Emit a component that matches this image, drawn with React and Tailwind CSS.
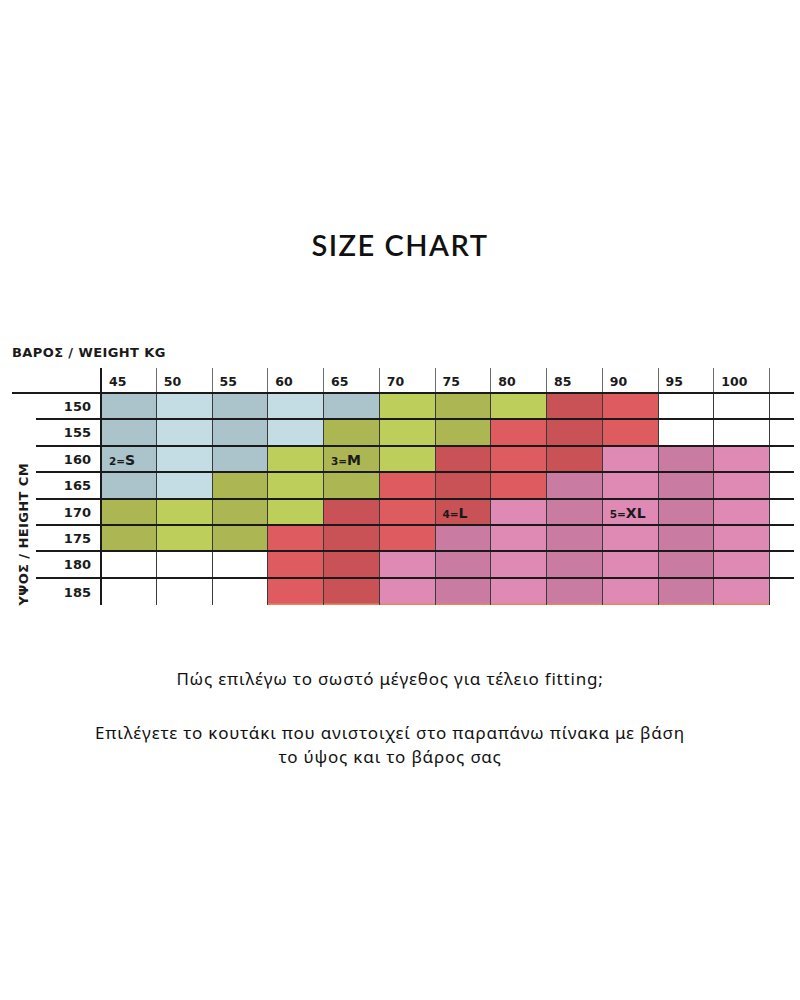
import React from 'react'

const COLORS = {
  B1: 'bg-[#abc4cc]',
  B2: 'bg-[#c4dce3]',
  G1: 'bg-[#bdcf5a]',
  G2: 'bg-[#acb653]',
  R1: 'bg-[#c95257]',
  R2: 'bg-[#de5b5f]',
  P1: 'bg-[#c97ba2]',
  P2: 'bg-[#df8ab4]',
  W: 'bg-white',
}

const weights = [45, 50, 55, 60, 65, 70, 75, 80, 85, 90, 95, 100]

// height rows: colour per weight column, plus optional size labels
const rows = [
  { h: 150, c: ['B1', 'B2', 'B1', 'B2', 'B1', 'G1', 'G2', 'G1', 'R1', 'R2', 'W', 'W'] },
  { h: 155, c: ['B1', 'B2', 'B1', 'B2', 'G2', 'G1', 'G2', 'R2', 'R1', 'R2', 'W', 'W'] },
  { h: 160, c: ['B1', 'B2', 'B1', 'G1', 'G2', 'G1', 'R1', 'R2', 'R1', 'P2', 'P1', 'P2'], labels: { 0: ['2=', 'S'], 4: ['3=', 'M'] } },
  { h: 165, c: ['B1', 'B2', 'G2', 'G1', 'G2', 'R2', 'R1', 'R2', 'P1', 'P2', 'P1', 'P2'] },
  { h: 170, c: ['G2', 'G1', 'G2', 'G1', 'R1', 'R2', 'R1', 'P2', 'P1', 'P2', 'P1', 'P2'], labels: { 6: ['4=', 'L'], 9: ['5=', 'XL'] } },
  { h: 175, c: ['G2', 'G1', 'G2', 'R2', 'R1', 'R2', 'P1', 'P2', 'P1', 'P2', 'P1', 'P2'] },
  { h: 180, c: ['W', 'W', 'W', 'R2', 'R1', 'P2', 'P1', 'P2', 'P1', 'P2', 'P1', 'P2'] },
  { h: 185, c: ['W', 'W', 'W', 'R2', 'R1', 'P2', 'P1', 'P2', 'P1', 'P2', 'P1', 'P2'] },
]

const chartFont = { fontFamily: '"DejaVu Sans", "Noto Sans", sans-serif' }

const SizeChart = () => {
  return (
    <div className="ml-[12px] w-[782px]" style={chartFont}>
      {/* Weight axis title */}
      <div className="text-[13px] font-bold leading-[16px] tracking-[0.4px] text-[#1a1a1a]">
        ΒΑΡΟΣ / WEIGHT KG
      </div>

      {/* Header row */}
      <div className="mt-[7px] flex h-[26px] border-b-2 border-[#1a1a1a]">
        <div className="w-[88px]" />
        {weights.map((w, i) => (
          <div
            key={w}
            className={`w-[55.75px] pl-[7px] pt-[6px] text-[12.5px] font-bold leading-[16px] text-[#1a1a1a] ${
              i === 0 ? 'border-l-2 border-[#1a1a1a]' : 'border-l-[1.5px] border-[#6b6b6b]'
            }`}
          >
            {w}
          </div>
        ))}
        <div className="w-[25px] border-l-[1.5px] border-[#6b6b6b]" />
      </div>

      {/* Body */}
      <div className="flex">
        {/* Height axis title */}
        <div className="flex w-[24px] items-end justify-center">
          <div className="rotate-180 whitespace-nowrap text-[13px] font-bold leading-[16px] tracking-[0.4px] text-[#1a1a1a] [writing-mode:vertical-rl]">
            ΥΨΟΣ / HEIGHT CM
          </div>
        </div>

        <div className="flex flex-1 flex-col">
          {rows.map((row, ri) => {
            const last = ri === rows.length - 1
            return (
              <div key={row.h} className={`flex h-[26.4px] ${!last ? 'border-b-2 border-[#1a1a1a]' : ''}`}>
                <div className="flex w-[64px] items-center justify-end pr-[9px] pt-[1px] text-[13px] font-bold text-[#1a1a1a]">
                  {row.h}
                </div>
                {row.c.map((c, ci) => {
                  const label = row.labels && row.labels[ci]
                  return (
                    <div
                      key={ci}
                      className={`flex w-[55.75px] items-center pl-[7px] ${COLORS[c]} ${
                        ci === 0 ? 'border-l-2 border-[#1a1a1a]' : 'border-l-[1.5px] border-[#3a3a3a]'
                      } ${last && c !== 'W' ? 'shadow-[inset_0_-1.5px_0_#e6855f]' : ''}`}
                    >
                      {label && (
                        <span className="pt-[3px] font-bold leading-none text-[#1a1a1a]">
                          <span className="text-[10.5px]">{label[0]}</span>
                          <span className="text-[14px]">{label[1]}</span>
                        </span>
                      )}
                    </div>
                  )
                })}
                <div className="w-[25px] border-l-[1.5px] border-[#3a3a3a]" />
              </div>
            )
          })}
        </div>
      </div>
    </div>
  )
}

export default function App() {
  return (
    <div className="min-h-[1000px] w-[800px] bg-white text-[#111]">
      {/* Title */}
      <h1
        className="pt-[228px] text-center text-[29px] leading-[34px] tracking-[1.5px] text-[#111]"
        style={{ fontFamily: '"Lato", "Noto Sans", sans-serif', fontWeight: 600 }}
      >
        SIZE CHART
      </h1>

      <div className="mt-[83px]">
        <SizeChart />
      </div>

      {/* Instructions */}
      <div
        className="pr-[20px] text-center text-[17px] leading-[24px] tracking-[0.8px] text-[#111]"
        style={{ fontFamily: '"Noto Sans", sans-serif' }}
      >
        <p className="mt-[62px]">Πώς επιλέγω το σωστό μέγεθος για τέλειο fitting;</p>
        <p className="mx-auto mt-[30px] w-[700px]">
          Επιλέγετε το κουτάκι που ανιστοιχεί στο παραπάνω πίνακα με βάση
          <br />
          το ύψος και το βάρος σας
        </p>
      </div>
    </div>
  )
}
